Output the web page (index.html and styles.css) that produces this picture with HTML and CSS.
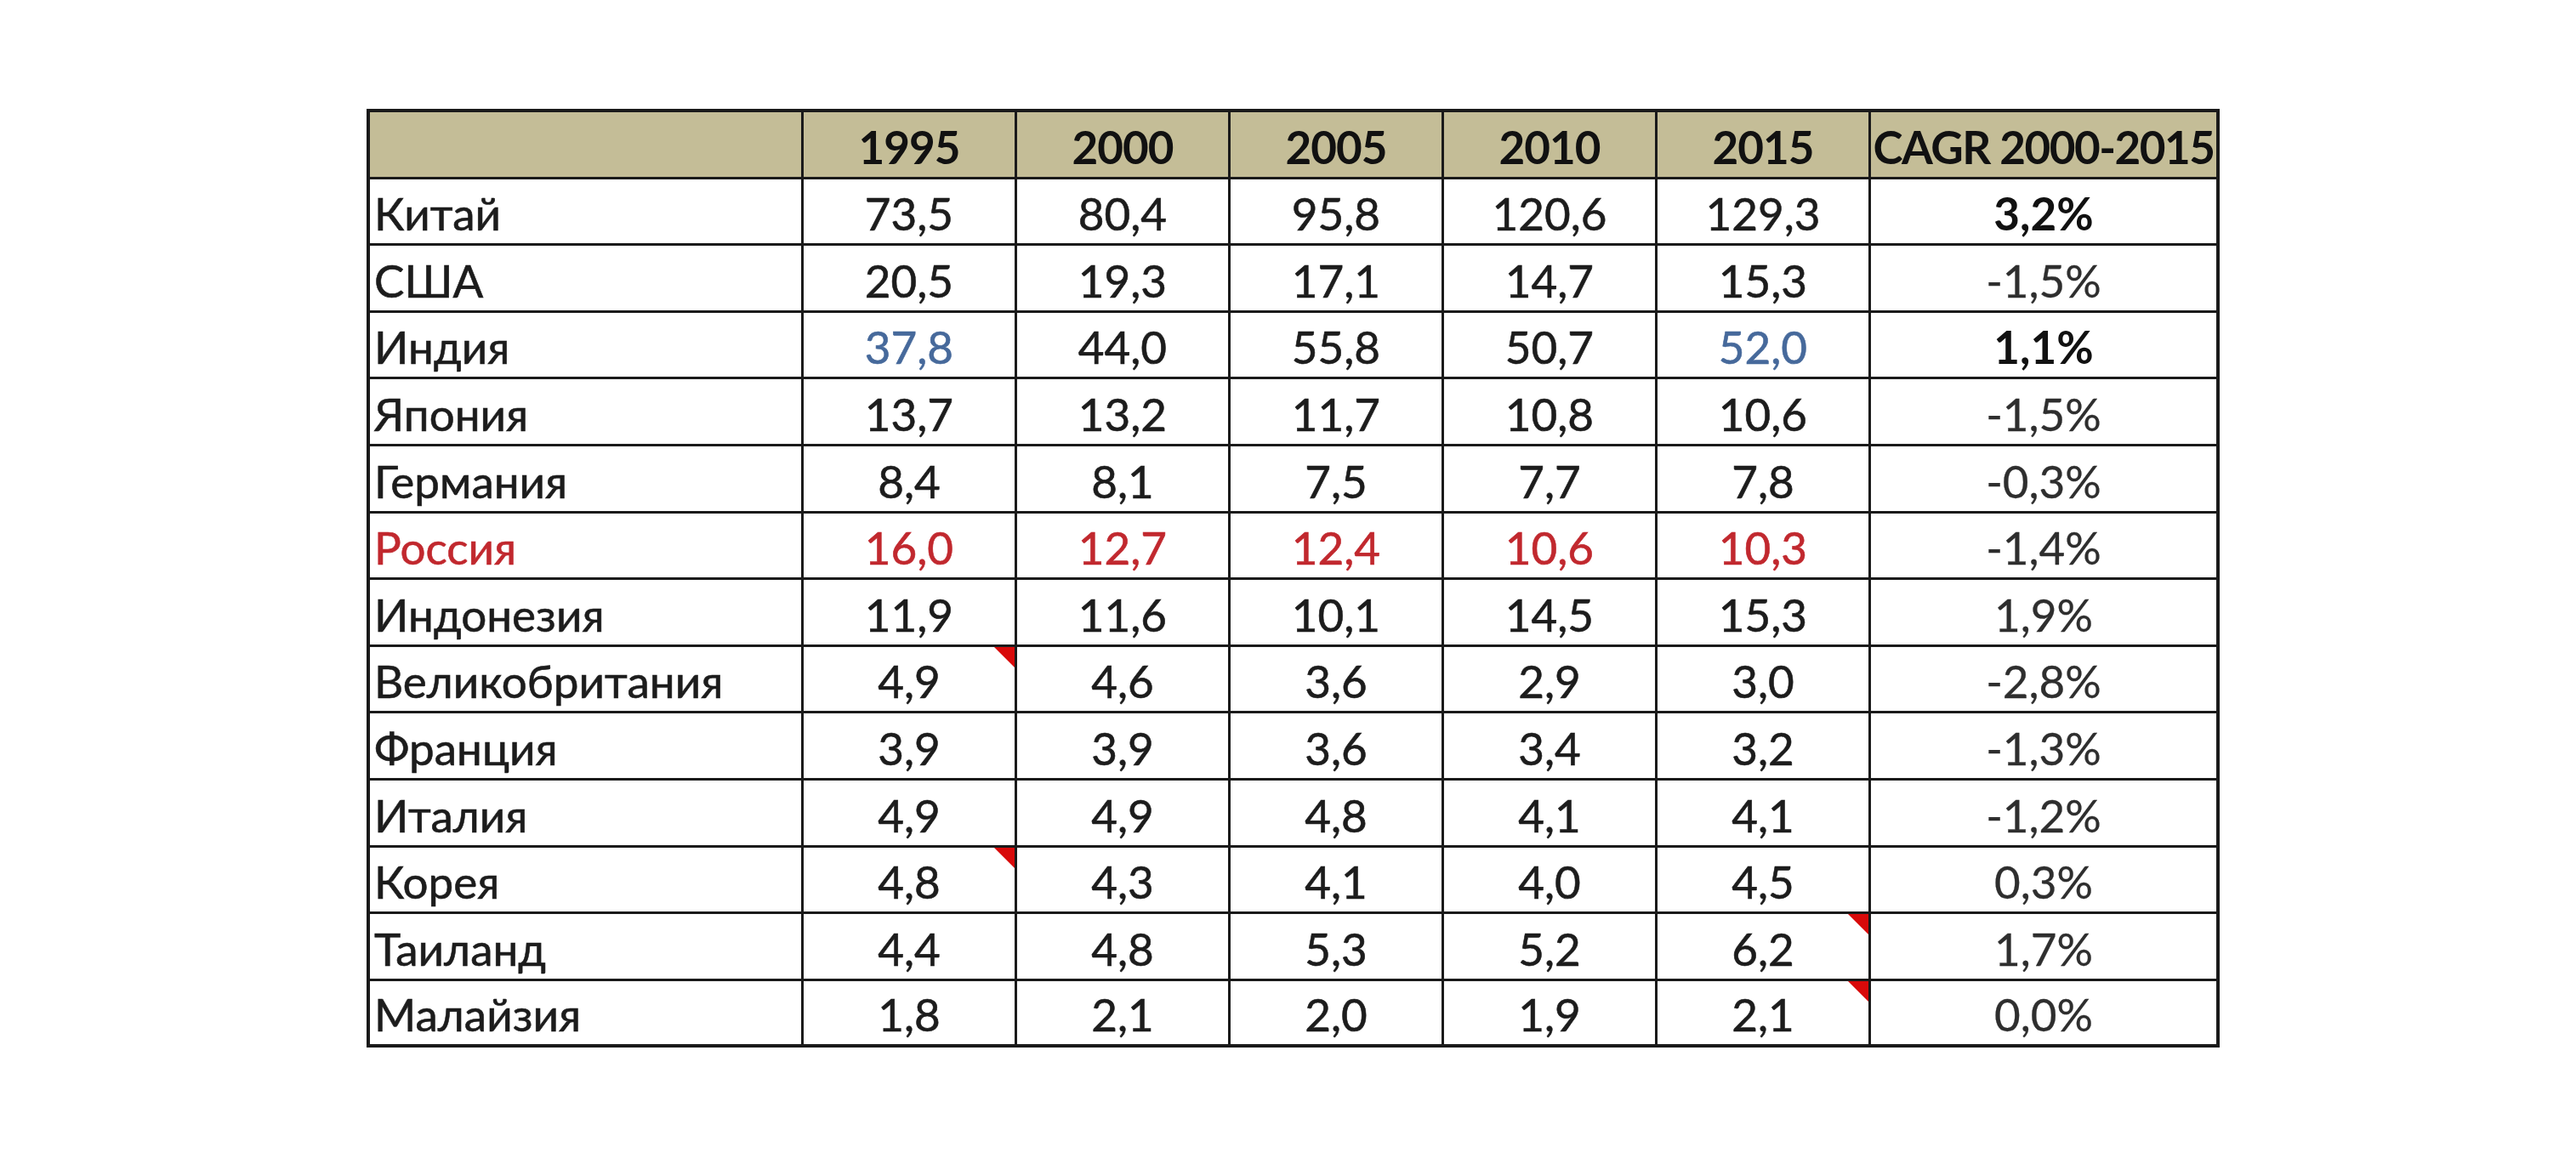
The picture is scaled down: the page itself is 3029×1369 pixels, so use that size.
FILE: index.html
```html
<!DOCTYPE html>
<html lang="ru">
<head>
<meta charset="utf-8">
<title>Таблица</title>
<link rel="stylesheet" href="styles.css">
</head>
<body>
<div class="page">
  <div class="grid">
    <div class="c h name"></div><div class="c h">1995</div><div class="c h">2000</div><div class="c h">2005</div><div class="c h">2010</div><div class="c h">2015</div><div class="c h last">CAGR 2000-2015</div>

    <div class="c name">Китай</div><div class="c">73,5</div><div class="c">80,4</div><div class="c">95,8</div><div class="c">120,6</div><div class="c">129,3</div><div class="c last b">3,2%</div>
    <div class="c name">США</div><div class="c">20,5</div><div class="c">19,3</div><div class="c">17,1</div><div class="c">14,7</div><div class="c">15,3</div><div class="c last g">-1,5%</div>
    <div class="c name">Индия</div><div class="c blue">37,8</div><div class="c">44,0</div><div class="c">55,8</div><div class="c">50,7</div><div class="c blue">52,0</div><div class="c last b">1,1%</div>
    <div class="c name">Япония</div><div class="c">13,7</div><div class="c">13,2</div><div class="c">11,7</div><div class="c">10,8</div><div class="c">10,6</div><div class="c last g">-1,5%</div>
    <div class="c name">Германия</div><div class="c">8,4</div><div class="c">8,1</div><div class="c">7,5</div><div class="c">7,7</div><div class="c">7,8</div><div class="c last g">-0,3%</div>
    <div class="c name red">Россия</div><div class="c red">16,0</div><div class="c red">12,7</div><div class="c red">12,4</div><div class="c red">10,6</div><div class="c red">10,3</div><div class="c last g">-1,4%</div>
    <div class="c name">Индонезия</div><div class="c">11,9</div><div class="c">11,6</div><div class="c">10,1</div><div class="c">14,5</div><div class="c">15,3</div><div class="c last g">1,9%</div>
    <div class="c name">Великобритания</div><div class="c note">4,9</div><div class="c">4,6</div><div class="c">3,6</div><div class="c">2,9</div><div class="c">3,0</div><div class="c last g">-2,8%</div>
    <div class="c name">Франция</div><div class="c">3,9</div><div class="c">3,9</div><div class="c">3,6</div><div class="c">3,4</div><div class="c">3,2</div><div class="c last g">-1,3%</div>
    <div class="c name">Италия</div><div class="c">4,9</div><div class="c">4,9</div><div class="c">4,8</div><div class="c">4,1</div><div class="c">4,1</div><div class="c last g">-1,2%</div>
    <div class="c name">Корея</div><div class="c note">4,8</div><div class="c">4,3</div><div class="c">4,1</div><div class="c">4,0</div><div class="c">4,5</div><div class="c last g">0,3%</div>
    <div class="c name">Таиланд</div><div class="c">4,4</div><div class="c">4,8</div><div class="c">5,3</div><div class="c">5,2</div><div class="c note">6,2</div><div class="c last g">1,7%</div>
    <div class="c name">Малайзия</div><div class="c">1,8</div><div class="c">2,1</div><div class="c">2,0</div><div class="c">1,9</div><div class="c note">2,1</div><div class="c last g">0,0%</div>
  </div>
</div>
</body>
</html>
```
FILE: styles.css
```css
html, body {
  margin: 0;
  padding: 0;
  background: #ffffff;
}

.page {
  padding: 128px 0 0 431px;
}

.grid {
  display: grid;
  grid-template-columns: 510px repeat(5, 251px) 410px;
  grid-auto-rows: 78.6px;
  width: max-content;
  border-top: 4px solid #1a1a1a;
  border-left: 4px solid #1a1a1a;
  font-family: "Lato", "Open Sans", "Noto Sans", sans-serif;
  font-size: 53px;
  line-height: 53px;
  color: #1c1c1c;
  -webkit-text-stroke: 0.6px currentColor;
}

.c {
  position: relative;
  box-sizing: border-box;
  border-right: 3px solid #1a1a1a;
  border-bottom: 3px solid #1a1a1a;
  display: flex;
  align-items: flex-end;
  justify-content: center;
  padding-bottom: 9px;
  white-space: nowrap;
}

.c.last {
  border-right-width: 4px;
}

.grid > .c:nth-last-child(-n+7) {
  border-bottom-width: 4px;
}

.c.name {
  justify-content: flex-start;
  padding-left: 5px;
}

.h {
  background: #c4bd97;
  font-weight: 700;
  color: #111111;
  letter-spacing: -1px;
  -webkit-text-stroke: 0;
}

.h.last {
  letter-spacing: -1.5px;
}

.b {
  font-weight: 700;
  color: #111111;
  -webkit-text-stroke: 0;
}

.g {
  color: #2e2e2e;
  -webkit-text-stroke: 0.3px currentColor;
}

.blue {
  color: #46699b;
}

.red {
  color: #c1282e;
}

.note::after {
  content: "";
  position: absolute;
  top: 0;
  right: 0;
  width: 0;
  height: 0;
  border-top: 24px solid #d80a0a;
  border-left: 24px solid transparent;
}
```
